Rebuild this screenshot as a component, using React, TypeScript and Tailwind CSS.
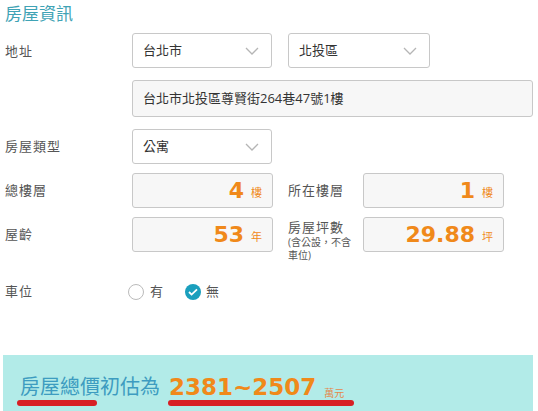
import React from 'react';

const Chevron: React.FC = () => (
  <svg width="14" height="8" viewBox="0 0 14 8" fill="none" className="shrink-0">
    <path d="M1 1l6 6 6-6" stroke="#b5b5b5" strokeWidth="1.3" />
  </svg>
);

const Select: React.FC<{ value: string; className: string }> = ({ value, className }) => (
  <div className={`flex items-center justify-between rounded-[3px] border border-[#c8c8c8] bg-white pl-[10px] pr-[12px] text-[13px] text-[#333] ${className}`}>
    <span>{value}</span>
    <Chevron />
  </div>
);

const ValueBox: React.FC<{ value: string; unit: string }> = ({ value, unit }) => (
  <div className="flex h-[35px] w-[141px] shrink-0 items-center justify-end gap-[7px] rounded-[3px] border border-[#c8c8c8] bg-[#f7f7f7] pr-[10px] text-[#f0891a]">
    <span className="font-['DejaVu_Sans',sans-serif] text-[22px] font-bold leading-none">{value}</span>
    <span className="pt-[4px] text-[11px] leading-none">{unit}</span>
  </div>
);

const Label: React.FC<{ children: React.ReactNode }> = ({ children }) => (
  <div className="w-[127px] shrink-0 text-[13px] tracking-[1px] text-[#555]">{children}</div>
);

export default function App() {
  return (
    <div className="h-[411px] w-[538px] overflow-hidden bg-white font-['Open_Sans','Noto_Sans_CJK_TC',sans-serif]">
      <div className="pl-[5px]">
        <h1 className="pt-[3px] text-[17px] leading-[22px] text-[#3fa3b5]">房屋資訊</h1>

        <div className="mt-[8px] flex items-start">
          <div className="pt-[9px]">
            <Label>地址</Label>
          </div>
          <div className="flex flex-col gap-[12px]">
            <div className="flex gap-[16px]">
              <Select value="台北市" className="h-[35px] w-[140px]" />
              <Select value="北投區" className="h-[35px] w-[142px]" />
            </div>
            <div className="flex h-[37px] w-[401px] items-center rounded-[3px] border border-[#c8c8c8] bg-[#f7f7f7] pl-[10px] text-[13px] text-[#333]">
              台北市北投區尊賢街264巷47號1樓
            </div>
          </div>
        </div>

        <div className="mt-[12px] flex items-center">
          <Label>房屋類型</Label>
          <Select value="公寓" className="h-[35px] w-[140px]" />
        </div>

        <div className="mt-[9px] flex items-center">
          <Label>總樓層</Label>
          <ValueBox value="4" unit="樓" />
          <div className="ml-[15px] w-[75px] text-[13px] tracking-[1px] text-[#555]">所在樓層</div>
          <ValueBox value="1" unit="樓" />
        </div>

        <div className="mt-[9px] flex h-[36px] items-start">
          <div className="pt-[8px]">
            <Label>屋齡</Label>
          </div>
          <ValueBox value="53" unit="年" />
          <div className="ml-[15px] w-[75px] pt-[1px] text-[#555]">
            <div className="text-[13px] leading-[18px] tracking-[1px]">房屋坪數</div>
            <div className="text-[10px] leading-[13px]">
              (含公設，不含
              <br />
              車位)
            </div>
          </div>
          <ValueBox value="29.88" unit="坪" />
        </div>

        <div className="mt-[29px] flex items-center">
          <Label>車位</Label>
          <label className="-ml-[4px] flex items-center gap-[6px] text-[13px] text-[#555]">
            <span className="h-[16px] w-[16px] rounded-full border border-[#bbb] bg-white" />
            有
          </label>
          <label className="ml-[22px] flex items-center gap-[5px] text-[13px] text-[#555]">
            <span className="flex h-[16px] w-[16px] items-center justify-center rounded-full bg-[#1a9fbd]">
              <svg width="10" height="8" viewBox="0 0 10 8" fill="none">
                <path d="M1 4l2.6 2.6L9 1.3" stroke="white" strokeWidth="1.8" />
              </svg>
            </span>
            無
          </label>
        </div>
      </div>

      <div className="ml-[3px] mt-[53px] h-[60px] w-[530px] bg-[#b2ebe8] pl-[17px] pt-[19px]">
        <div className="flex items-end">
          <span className="relative text-[20px] leading-[26px] text-[#3d9cc0]">
            <span className="relative">
              房屋總價
              <span className="absolute -bottom-[6px] -left-[3px] h-[6px] w-[80px] rounded-full bg-[#d71f24]" />
            </span>
            初估為
          </span>
          <span className="relative ml-[9px] flex items-end">
            <span className="font-['DejaVu_Sans',sans-serif] text-[23px] font-bold leading-[26px] text-[#f0891a]">2381~2507</span>
            <span className="ml-[8px] pb-[2px] text-[10px] leading-none text-[#e5884a]">萬元</span>
            <span className="absolute -bottom-[6px] -left-[1px] h-[6px] w-[186px] rounded-full bg-[#d71f24]" />
          </span>
        </div>
      </div>
    </div>
  );
}
